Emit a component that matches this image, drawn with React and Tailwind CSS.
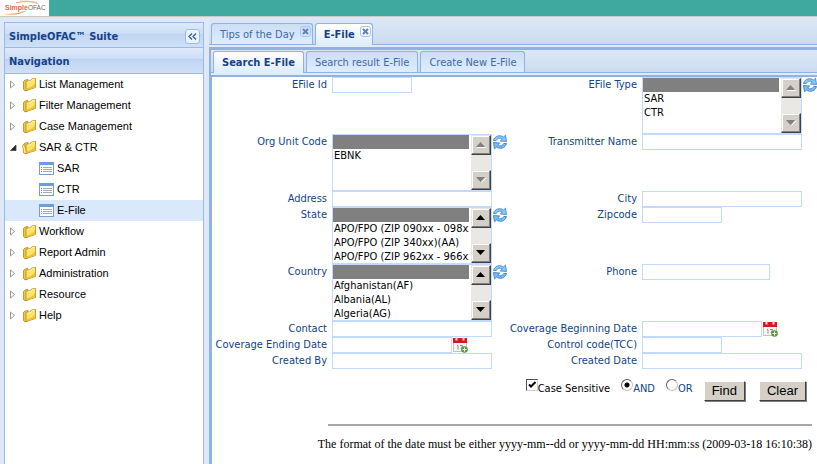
import { useId } from "react";

const tree = [
  { label: "List Management" },
  { label: "Filter Management" },
  { label: "Case Management" },
  {
    label: "SAR & CTR",
    children: [{ label: "SAR" }, { label: "CTR" }, { label: "E-File", selected: true }],
  },
  { label: "Workflow" },
  { label: "Report Admin" },
  { label: "Administration" },
  { label: "Resource" },
  { label: "Help" },
];

function LogoMark() {
  return (
    <div className="h-4 w-[49px] flex-none bg-white">
      <svg viewBox="0 0 49 16" className="h-4 w-[49px]" fill="none">
        <path d="M16 2.500Q27 .2 37 2.500" stroke="#f29a6c" strokeWidth="1" />
        <path d="M20 1Q30 0 39 4" stroke="#f7bb98" strokeWidth="0.8" />
        <path d="M3 14Q14 14.500 27 10.500Q18 16.500 3 14Z" fill="#f5a070" />
        <text x="5" y="10" fontSize="7" fontFamily="Liberation Sans, sans-serif" fill="#e8683c" fontWeight="bold">
          Simple
          <tspan fill="#6b6b6b" fontWeight="normal" fontSize="6.500">OFAC</tspan>
        </text>
      </svg>
    </div>
  );
}

function Folder({ open }) {
  return (
    <svg viewBox="0 0 16 16" className="size-4 flex-none">
      <path d="M1.500 4.500 3 3 6 2.500v10.500L3 14 1.500 12.500Z" fill="#f0c63c" stroke="#a87d14" strokeWidth="0.7" />
      <path d="M4 4.500 8.500 3.800 9.500 2 13.500 1.300V10.500L4 13.500Z" fill="#fce468" stroke="#b58818" strokeWidth="0.8" />
      <path d="M13.200 5.500v4.800L4.500 13V11.500Q11 10 13.200 5.500Z" fill="#f0c236" />
      <path d="M4.600 5.200 9 4.500 10 2.700 12.900 2.100" stroke="#fff9c4" fill="none" strokeWidth="0.8" />
      {open && <path d="M.5 5.500 2.500 4.500 4.500 13.500 2 13.500Z" fill="#fff0a0" stroke="#c59820" strokeWidth="0.8" />}
    </svg>
  );
}

function Leaf() {
  return (
    <svg viewBox="0 0 16 16" className="size-4 flex-none">
      <rect x="0.5" y="1.5" width="14" height="12" fill="#fff" stroke="#7a9ccf" />
      <rect x="0" y="1" width="15" height="3" fill="#6c9be0" />
      <path d="M2 6.500h1M2 8.500h1M2 10.500h1" stroke="#5b8ad0" />
      <path d="M4 6.500h9M4 8.500h9M4 10.500h9" stroke="#a3a9b3" />
    </svg>
  );
}

function Twisty({ open }) {
  return (
    <svg viewBox="0 0 14 16" className="h-4 w-[14px] flex-none">
      {open ? (
        <path d="M8 5v5.500H2.500Z" fill="#222" stroke="#444" strokeWidth="0.8" />
      ) : (
        <path d="M2.500 4v7L6.500 7.500Z" fill="#fff" stroke="#9a9a9a" />
      )}
    </svg>
  );
}

function TreeRow({ item }) {
  return (
    <li>
      <a href="#" className="flex h-[21px] items-center pl-[3px] text-black">
        <Twisty open={!!item.children} />
        <Folder open={!!item.children} />
        <span className="pl-px">{item.label}</span>
      </a>
      {item.children && (
        <ul>
          {item.children.map((c) => (
            <li key={c.label} className={c.selected ? "bg-[#d9e8fb]" : ""}>
              <a href="#" className="flex h-[21px] items-center gap-[2px] pl-[34px] text-black">
                <Leaf />
                {c.label}
              </a>
            </li>
          ))}
        </ul>
      )}
    </li>
  );
}

function Sidebar() {
  const bar =
    "flex items-center border-b border-[#99bbe8] bg-[linear-gradient(#dfeafa,#cbddf5_45%,#b9d1f1_46%,#c3d7f3_52%,#cfe0f6)] pt-1 pl-1 pr-[3px] font-['DejaVu_Sans_Condensed','DejaVu_Sans',sans-serif] text-[11px] font-bold text-[#15428b]";
  return (
    <aside className="mt-[5px] flex w-[200px] flex-none flex-col border border-b-0 border-[#99bbe8] bg-white">
      <div className={bar + " h-[25px] justify-between"}>
        <h1>SimpleOFAC™ Suite</h1>
        <button aria-label="Collapse" className="mb-[2px] flex size-[15px] items-center justify-center rounded-[3px] border border-[#9dbde8] bg-[#eaf2fd]">
          <svg viewBox="0 0 9 7" className="h-[7px] w-[9px]" fill="none" stroke="#2f5fa6" strokeWidth="1.300">
            <path d="M4 .5 1 3.500 4 6.500M8 .5 5 3.500 8 6.500" />
          </svg>
        </button>
      </div>
      <h2 className={bar + " h-[26px]"}>Navigation</h2>
      <ul className="font-['Liberation_Sans',Arial,sans-serif] text-[11px]">
        {tree.map((t) => (
          <TreeRow key={t.label} item={t} />
        ))}
      </ul>
    </aside>
  );
}

function Tab({ label, active, closable }) {
  return (
    <div
      className={
        "flex flex-none items-start rounded-t-[3px] border border-b-0 border-[#8db2e3] pt-[3px] pl-2 " +
        (active
          ? "relative -mb-px h-[22px] bg-linear-to-b from-white to-[#deecfd] font-bold text-[#15428b]"
          : "h-[21px] bg-linear-to-b from-[#ccdef6] to-[#deecfd] text-[#416aa3]") +
        (closable ? " gap-[5px] pr-px" : " pr-2")
      }
    >
      <button role="tab" aria-selected={!!active} className="leading-[15px]">
        {label}
      </button>
      {closable && (
        <button aria-label={"Close " + label} className="-mt-px flex size-[11px] items-center justify-center rounded-[3px] border border-[#a9c4ea]">
          <svg viewBox="0 0 7 7" className="size-[7px]" stroke="#5f83b8" strokeWidth="2">
            <path d="M1 1l5 5M6 1 1 6" />
          </svg>
        </button>
      )}
    </div>
  );
}

function TabStrip({ nested, children }) {
  return (
    <div>
      <div
        role="tablist"
        className={
          "flex items-end gap-[2px] border-b border-[#8db2e3] bg-linear-to-b from-[#dde8f6] to-[#cbdbef] pl-[2px] " +
          (nested ? "pt-px" : "pt-[6px]")
        }
      >
        {children}
      </div>
      <div className="h-[2px] bg-[#deecfd]" />
    </div>
  );
}

function Refresh() {
  return (
    <button type="button" aria-label="Refresh" className="size-4 flex-none">
      <svg viewBox="0 0 16 16" className="size-4">
        <path d="M1.500 6.500C2.500 2 8 .3 11.500 3L13.500 1.200 14.500 7.500 8.300 7l2-1.900C8 3.500 5.500 4 4.200 6.500Z" fill="#8cc8f7" stroke="#2d7fcb" strokeWidth="0.8" />
        <path d="M14.500 9.500C13.500 14 8 15.700 4.500 13L2.500 14.800 1.500 8.500 7.700 9l-2 1.900C8 12.500 10.500 12 11.800 9.500Z" fill="#7cbdf3" stroke="#2674c0" strokeWidth="0.8" />
      </svg>
    </button>
  );
}

function Calendar() {
  return (
    <button type="button" aria-label="Pick a date" className="size-4 flex-none">
      <svg viewBox="0 0 16 16" className="size-4">
        <rect x="1.500" y="2.500" width="13" height="12" fill="#f4f4f4" stroke="#c4c4c4" />
        <rect x="1" y="1" width="14" height="5" fill="#d8161b" />
        <path d="M4.500 0v3.500M11.500 0v3.500" stroke="#e4e4e4" strokeWidth="2" />
        <path d="M5 8.500h1V12.500M8 8.500h2.500L9 12" stroke="#909090" fill="none" />
        <circle cx="12.500" cy="12.500" r="3.300" fill="#4f9a35" />
        <path d="M10.500 12.500h4M12.500 10.500v4" stroke="#fff" strokeWidth="1.200" />
      </svg>
    </button>
  );
}

function ScrollButton({ up, enabled }) {
  return (
    <button
      type="button"
      aria-label={up ? "Scroll up" : "Scroll down"}
      className="flex h-5 w-5 items-center justify-center border border-t-[#e8e6e0] border-r-[#404040] border-b-[#404040] border-l-[#e8e6e0] bg-[#d4d0c8] shadow-[inset_-1px_-1px_0_#808080,inset_1px_1px_0_#fff]"
    >
      <svg viewBox="0 0 10 6" className="h-[6px] w-[10px]">
        {!enabled && <path d={up ? "M1 5.500h9" : "M10 1 5.500 5.500"} stroke="#fff" />}
        <path d={up ? "M0 5 4.500 0 9 5Z" : "M0 0 4.500 5 9 0Z"} fill={enabled ? "#000" : "#808080"} />
      </svg>
    </button>
  );
}

function Label({ id, children }) {
  return (
    <label htmlFor={id} className="text-right leading-[15px] whitespace-nowrap text-[#104585]">
      {children}
    </label>
  );
}

function TextField({ label, width = "w-40", calendar }) {
  const id = useId();
  return (
    <>
      <Label id={id}>{label}</Label>
      <div className="flex min-w-0">
        <input id={id} type="text" className={"h-4 flex-none border border-[#c3daff] bg-white px-[2px] outline-none " + width} />
        {calendar && <Calendar />}
      </div>
    </>
  );
}

function ListField({ label, options = [], scrollable }) {
  const id = useId();
  return (
    <>
      <Label id={id}>{label}</Label>
      <div className="flex min-w-0">
        <div className="flex h-[57px] w-40 flex-none border border-[#c3daff] bg-white">
          <select
            id={id}
            multiple
            size={4}
            defaultValue={[""]}
            className="mr-[2px] h-[55px] min-w-0 flex-1 appearance-none overflow-hidden border-0 bg-white p-0 text-black outline-none [scrollbar-width:none]"
          >
            <option value="" aria-label="Any" className="h-[14px] min-h-0 p-0 checked:bg-[linear-gradient(#808080,#808080)]"></option>
            {options.map((o) => (
              <option key={o} className="h-[14px] min-h-0 p-0 pl-px leading-[15px]">
                {o}
              </option>
            ))}
          </select>
          <div className="flex w-5 flex-none flex-col justify-between bg-[#eae8e4]">
            <ScrollButton up enabled={scrollable} />
            <ScrollButton enabled={scrollable} />
          </div>
        </div>
        <Refresh />
      </div>
    </>
  );
}

function SearchForm() {
  const push =
    "h-5 border border-t-white border-r-[#404040] border-b-[#404040] border-l-white bg-[#d4d0c8] px-[7px] font-['Liberation_Sans',Arial,sans-serif] text-[13px] leading-[18px] text-black shadow-[1px_1px_0_#808080]";
  return (
    <form className="overflow-hidden bg-white" onSubmit={(e) => e.preventDefault()}>
      <div className="grid grid-cols-[115px_172px_128px_minmax(0,1fr)] gap-x-[5px]">
        <TextField label="EFile Id" width="w-20" />
        <ListField label="EFile Type" options={["SAR", "CTR"]} />
        <ListField label="Org Unit Code" options={["EBNK"]} />
        <TextField label="Transmitter Name" />
        <TextField label="Address" />
        <TextField label="City" />
        <ListField
          label="State"
          options={["APO/FPO (ZIP 090xx - 098xx)(AE)", "APO/FPO (ZIP 340xx)(AA)", "APO/FPO (ZIP 962xx - 966xx)(AP)"]}
          scrollable
        />
        <TextField label="Zipcode" width="w-20" />
        <ListField label="Country" options={["Afghanistan(AF)", "Albania(AL)", "Algeria(AG)"]} scrollable />
        <TextField label="Phone" width="w-32" />
        <TextField label="Contact" />
        <TextField label="Coverage Beginning Date" width="w-[120px]" calendar />
        <TextField label="Coverage Ending Date" width="w-[120px]" calendar />
        <TextField label="Control code(TCC)" width="w-20" />
        <TextField label="Created By" />
        <TextField label="Created Date" />
      </div>
      <div className="flex items-start justify-end pt-[10px] pr-[11px]">
        <label className="flex items-start text-black">
          <span className="grid size-3">
            <input
              type="checkbox"
              defaultChecked
              className="peer col-start-1 row-start-1 size-3 appearance-none border border-t-[#505050] border-r-[#d4d0c8] border-b-[#d4d0c8] border-l-[#505050] bg-white"
            />
            <svg viewBox="0 0 12 12" className="pointer-events-none invisible col-start-1 row-start-1 size-3 peer-checked:visible" fill="none" stroke="#000" strokeWidth="2">
              <path d="M3 5.500 5 7.500 9.500 3" />
            </svg>
          </span>
          <span className="pt-[3px] leading-[14px]">Case Sensitive</span>
        </label>
        {["AND", "OR"].map((v) => (
          <label key={v} className="ml-[11px] flex items-start text-[#104585]">
            <input
              type="radio"
              name="mode"
              defaultChecked={v === "AND"}
              className="size-3 appearance-none rounded-full border border-t-[#606060] border-r-[#c8c4bc] border-b-[#c8c4bc] border-l-[#606060] bg-white checked:bg-[radial-gradient(circle,#000_2px,#fff_3px)]"
            />
            <span className="pt-[3px] leading-[14px]">{v}</span>
          </label>
        ))}
        <button className={push + " mt-[2px] ml-[11px]"}>Find</button>
        <button className={push + " mt-[2px] ml-[14px]"}>Clear</button>
      </div>
      <hr className="mt-[23px] mr-[5px] ml-[116px] border-t-2 border-[#a8a8a8]" />
      <p className="mt-[10px] pr-[5px] text-right font-['Liberation_Serif','Times_New_Roman',serif] text-[12px] leading-[16px] whitespace-nowrap text-black">
        The format of the date must be either yyyy-mm--dd or yyyy-mm-dd HH:mm:ss (2009-03-18 16:10:38)
      </p>
    </form>
  );
}

export default function App() {
  return (
    <div className="flex min-h-screen flex-col overflow-hidden bg-[#dfe8f6] font-['DejaVu_Sans_Condensed','DejaVu_Sans',sans-serif] text-[11px]">
      <header className="flex flex-none border-b border-[#c9c9c9] bg-[#3fa9a0]">
        <LogoMark />
      </header>
      <div className="flex flex-1 pl-1">
        <Sidebar />
        <main className="ml-[5px] flex min-w-0 flex-1 flex-col">
          <TabStrip>
            <Tab label="Tips of the Day" closable />
            <Tab label="E-File" active closable />
          </TabStrip>
          <div className="flex flex-1 flex-col border-t-3 border-l-2 border-[#8db2e3] bg-white">
            <TabStrip nested>
              <Tab label="Search E-File" active />
              <Tab label="Search result E-File" />
              <Tab label="Create New E-File" />
            </TabStrip>
            <div className="flex-1 border-t-2 border-l border-[#8db2e3]">
              <SearchForm />
            </div>
          </div>
        </main>
      </div>
    </div>
  );
}
